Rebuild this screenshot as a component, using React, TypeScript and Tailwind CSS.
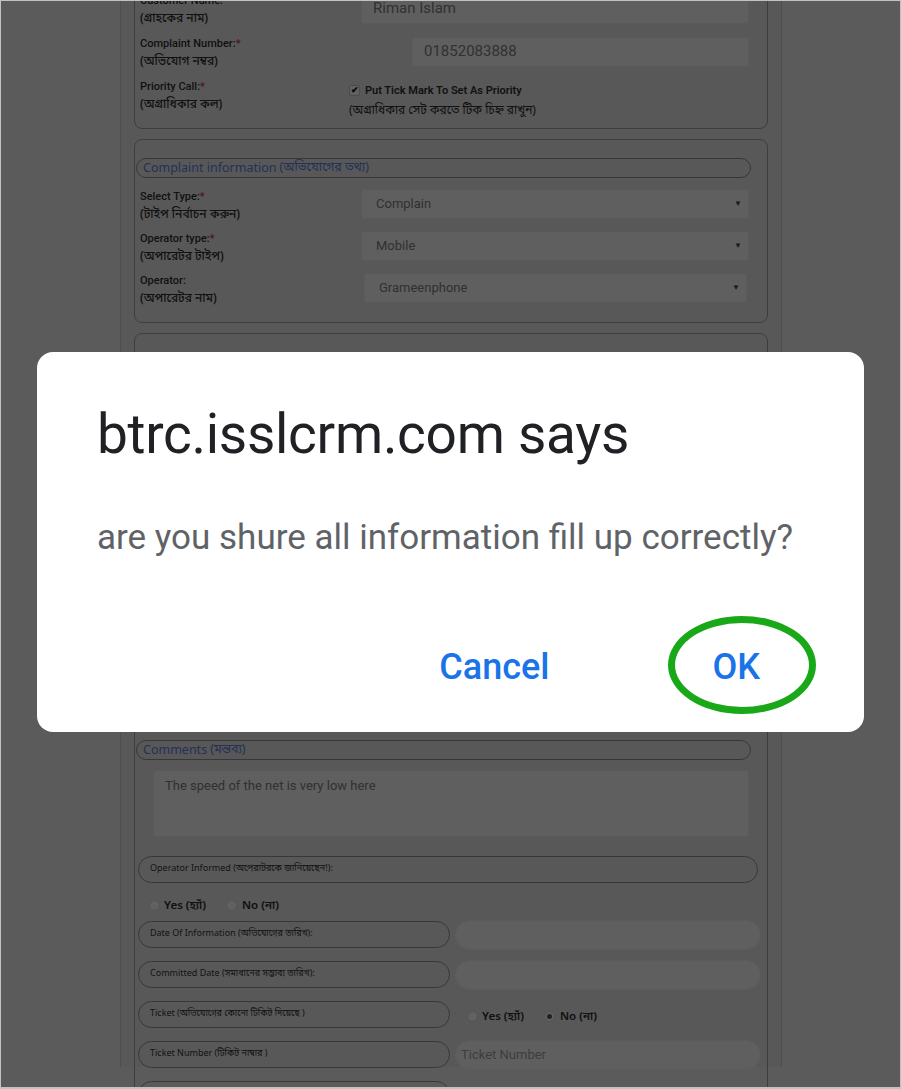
import React from "react";

const bn = { fontFamily: '"Noto Sans Bengali", "Noto Sans", Roboto, sans-serif' };

function Label({ en, bnText, req }: { en: string; bnText: string; req?: boolean }) {
  return (
    <div className="text-[11px] leading-[18px] font-medium text-[#2e2e2e] mt-[3px]">
      <div>
        {en}
        {req && <span className="text-[#c0392b]">*</span>}
      </div>
      <div className="text-[12px]" style={bn}>{bnText}</div>
    </div>
  );
}

function Select({ value, className }: { value: string; className: string }) {
  return (
    <div className={"h-[30px] bg-[#eeeeee] border border-[#e2e2e2] rounded-[3px] flex items-center justify-between pl-[14px] pr-[6px] text-[13px] text-[#7a7a7a] " + className}>
      <span>{value}</span>
      <span className="text-[8px] text-[#444]">▼</span>
    </div>
  );
}

function Pill({ children }: { children: React.ReactNode }) {
  return (
    <div className="ml-[1px] mr-[16px] h-[20px] rounded-full border border-[#8a8a8a] flex items-center pl-[6px] text-[12.5px] text-[#5b7bd5]" style={{ fontFamily: '"Noto Sans", Roboto, sans-serif' }}>
      {children}
    </div>
  );
}

function Radio({ checked }: { checked?: boolean }) {
  return (
    <span className="w-[11px] h-[11px] rounded-full bg-[#f2f2f2] border border-[#cfcfcf] flex items-center justify-center">
      {checked && <span className="w-[5px] h-[5px] rounded-full bg-[#555]" />}
    </span>
  );
}

function YesNo({ noChecked }: { noChecked?: boolean }) {
  return (
    <div className="flex items-center text-[11.5px] font-semibold text-[#2e2e2e]">
      <Radio />
      <span className="ml-[4px] mt-[3px]" style={bn}>Yes (হ্যাঁ)</span>
      <span className="ml-[20px]"><Radio checked={noChecked} /></span>
      <span className="ml-[5px] mt-[3px]" style={bn}>No (না)</span>
    </div>
  );
}

function Row({ label, right }: { label: string; right: React.ReactNode }) {
  return (
    <div className="flex items-center h-[31px]">
      <div className="ml-[3px] w-[312px] h-[27px] rounded-full border border-[#8a8a8a] flex items-center pl-[11px] text-[9px] text-[#333]" style={bn}>
        {label}
      </div>
      <div className="ml-[5px] w-[306px] flex items-center">{right}</div>
    </div>
  );
}

function RoundInput({ placeholder }: { placeholder?: string }) {
  return (
    <div className="w-full h-[30px] rounded-full bg-[#eeeeee] border border-[#e4e4e4] flex items-center pl-[5px] text-[13px] text-[#9a9a9a]">
      {placeholder}
    </div>
  );
}

export default function App() {
  return (
    <div className="relative w-[901px] h-[1089px] overflow-hidden bg-[#e4e4e4]" style={{ fontFamily: "Roboto, sans-serif" }}>
      <div className="ml-[120px] w-[662px] h-full bg-[#dcdcdc] border-x border-[#c4c4c4] px-[13px]">
        {/* customer info */}
        <div className="mt-[-22px] border border-[#9a9a9a] rounded-[8px] pt-[8px] pb-[12px]">
          <div className="flex items-center h-[43px]">
            <div className="w-[226px] pl-[5px]">
              <Label en="Customer Name:" bnText="(গ্রাহকের নাম)" req />
            </div>
            <div className="flex-1 mr-[18px] h-[30px] bg-[#eeeeee] border border-[#e2e2e2] rounded-[3px] flex items-center pl-[11px] text-[15px] text-[#7a7a7a]">Riman Islam</div>
          </div>
          <div className="flex items-center h-[43px]">
            <div className="w-[277px] pl-[5px]">
              <Label en="Complaint Number:" bnText="(অভিযোগ নম্বর)" req />
            </div>
            <div className="flex-1 mr-[18px] h-[30px] bg-[#eeeeee] border border-[#e2e2e2] rounded-[3px] flex items-center pl-[11px] text-[15px] text-[#7a7a7a]">01852083888</div>
          </div>
          <div className="flex items-center h-[43px]">
            <div className="w-[214px] pl-[5px]">
              <Label en="Priority Call:" bnText="(অগ্রাধিকার কল)" req />
            </div>
            <div className="text-[11px] font-semibold text-[#2e2e2e] leading-[20px] mt-[12px]">
              <div className="flex items-center">
                <span className="w-[11px] h-[11px] bg-[#f2f2f2] border border-[#bbb] rounded-[2px] flex items-center justify-center text-[9px] leading-none text-[#111]">✔</span>
                <span className="ml-[5px]">Put Tick Mark To Set As Priority</span>
              </div>
              <div className="font-normal text-[12px]" style={bn}>(অগ্রাধিকার সেট করতে টিক চিহ্ন রাখুন)</div>
            </div>
          </div>
        </div>

        {/* complaint information */}
        <div className="mt-[10px] border border-[#9a9a9a] rounded-[8px] pt-[18px] pb-[13px]">
          <Pill>
            Complaint information <span className="ml-[3px]" style={bn}>(অভিযোগের তথ্য)</span>
          </Pill>
          <div className="mt-[5px]">
            <div className="flex items-center h-[42px]">
              <div className="w-[226px] pl-[5px]">
                <Label en="Select Type:" bnText="(টাইপ নির্বাচন করুন)" req />
              </div>
              <Select value="Complain" className="flex-1 mr-[18px]" />
            </div>
            <div className="flex items-center h-[42px]">
              <div className="w-[226px] pl-[5px]">
                <Label en="Operator type:" bnText="(অপারেটর টাইপ)" req />
              </div>
              <Select value="Mobile" className="flex-1 mr-[18px]" />
            </div>
            <div className="flex items-center h-[42px]">
              <div className="w-[229px] pl-[5px]">
                <Label en="Operator:" bnText="(অপারেটর নাম)" />
              </div>
              <Select value="Grameenphone" className="flex-1 mr-[20px]" />
            </div>
          </div>
        </div>

        {/* complaint details (top part hidden behind the alert) */}
        <div className="mt-[10px] border border-[#9a9a9a] rounded-[8px] h-[800px]">
          <div className="h-[406px]" />
          <Pill>
            Comments <span className="ml-[3px]" style={bn}>(মন্তব্য)</span>
          </Pill>
          <div className="mt-[10px] ml-[18px] mr-[18px] h-[67px] bg-[#eeeeee] border border-[#e2e2e2] rounded-[3px] pl-[11px] pt-[5px] text-[13px] text-[#7a7a7a]">
            The speed of the net is very low here
          </div>
          <div className="mt-[19px] ml-[3px] mr-[9px] h-[27px] rounded-full border border-[#8a8a8a] flex items-center pl-[11px] text-[9px] text-[#333]" style={bn}>
            Operator Informed (অপেরাটরকে জানিয়েছেন!):
          </div>
          <div className="mt-[11px] h-[22px] pl-[14px] flex items-center">
            <YesNo />
          </div>
          <div className="mt-[3px] flex flex-col gap-[9px]">
            <Row label="Date Of Information (অভিযোগের তারিখ):" right={<RoundInput />} />
            <Row label="Committed Date (সমাধানের সম্ভাব্য তারিখ):" right={<RoundInput />} />
            <Row label="Ticket (অভিযোগের কোনো টিকিট দিয়েছে )" right={<div className="pl-[12px] mt-[4px]"><YesNo noChecked /></div>} />
            <Row label="Ticket Number (টিকিট নাম্বার )" right={<RoundInput placeholder="Ticket Number" />} />
            <div className="flex items-center h-[31px]">
              <div className="ml-[3px] w-[312px] h-[27px] rounded-full border border-[#8a8a8a]" />
            </div>
          </div>
        </div>
      </div>

      {/* dim overlay */}
      <div className="absolute inset-0 bg-black/60" />

      {/* alert dialog */}
      <div className="absolute left-[37px] top-[352px] w-[827px] h-[380px] bg-white rounded-[16px] pl-[60px] pt-[55px]">
        <div className="text-[55px] leading-none text-[#202124] tracking-[-0.3px]">btrc.isslcrm.com says</div>
        <div className="mt-[58px] text-[35px] leading-none text-[#5f6368]">are you shure all information fill up correctly?</div>
        <div className="mt-[94px] flex justify-end pr-[104px] text-[36px] leading-none font-medium text-[#1a73e8]">
          <span>Cancel</span>
          <span className="relative ml-[163px]">
            OK
            <span className="absolute left-[-44px] top-[-33px] w-[148px] h-[98px] rounded-[50%] border-[7px] border-[#18a818]" />
          </span>
        </div>
      </div>

      {/* screenshot frame */}
      <div className="absolute inset-0 border border-b-2 border-[#c2c2c2] pointer-events-none" />
    </div>
  );
}
